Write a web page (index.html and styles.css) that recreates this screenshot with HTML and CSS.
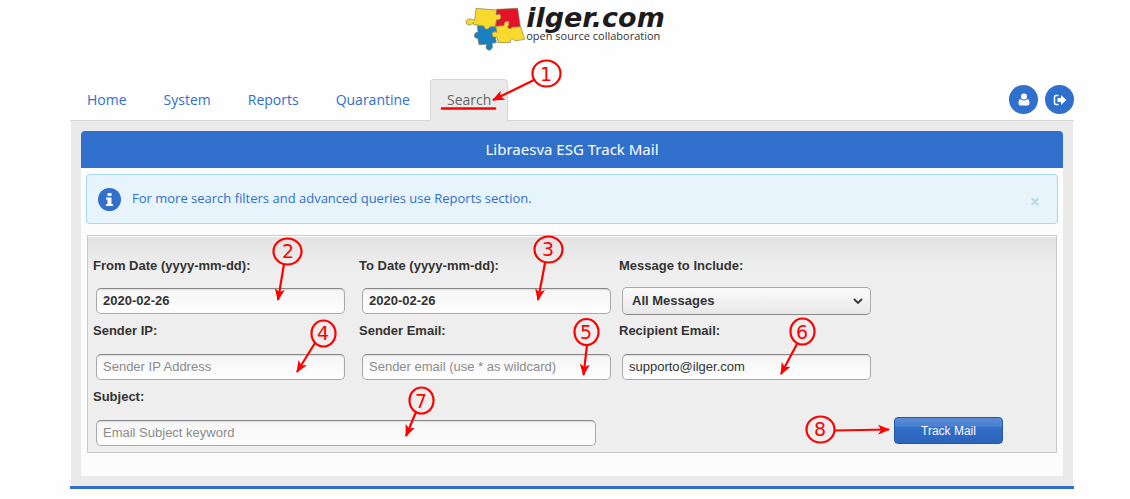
FILE: index.html
```html
<!DOCTYPE html>
<html lang="en">
<head>
<meta charset="utf-8">
<title>Libraesva ESG Track Mail</title>
<link rel="stylesheet" href="styles.css">
</head>
<body>
<div class="page">
  <header class="brand">
    <svg class="brand-mark" viewBox="24 18 183 138" aria-hidden="true">
      <g stroke="#8a7a50" stroke-width="2" stroke-linejoin="round">
        <path fill="#1a80c4" d="M61 77 L82 79 Q88 91 97 82 L116 80 L119 97 Q111 91 106 99 Q106 109 115 109 L118 128 L105 130 Q110 147 97 151 Q83 149 89 133 L66 134 L62 114 Q52 117 52 104 Q56 95 63 97 Z"/>
        <path fill="#f8da2c" d="M57 25 L119 30 L118 44 Q129 39 132 48 Q133 61 119 59 L116 79 L100 79 Q94 93 83 85 L80 77 L49 74 L49 68 Q39 80 29 72 Q24 61 35 57 Q44 55 53 61 Z"/>
        <path fill="#e5122b" d="M119 28 L182 25 L190 80 L166 82 Q160 92 151 85 Q148 73 157 68 Q152 60 143 67 L141 77 L116 78 L119 60 Q133 62 132 48 Q129 39 118 44 Z"/>
        <path fill="#f8da2c" d="M116 80 L141 77 Q140 65 150 65 Q161 71 152 80 Q156 91 166 82 L191 80 L203 118 L174 123 Q166 112 160 120 Q163 130 154 128 L124 128 L120 111 Q105 115 105 102 Q108 92 120 97 Z"/>
      </g>
    </svg>
    <div class="brand-text">
      <span class="brand-name">ilger.com</span>
      <span class="brand-tag">open source collaboration</span>
    </div>
  </header>

  <nav class="nav">
    <a class="tab" href="#home">Home</a>
    <a class="tab" href="#system">System</a>
    <a class="tab" href="#reports">Reports</a>
    <a class="tab" href="#quarantine">Quarantine</a>
    <a class="tab tab-active" href="#search">Search</a>
    <div class="actions">
      <button class="round" type="button" aria-label="Account">
        <svg viewBox="0 0 12 13" width="12" height="13"><path fill="#fff" d="M2.500 6Q.5 6.600 .5 10Q.5 12.500 2.500 12.500H9.500Q11.500 12.500 11.500 10Q11.500 6.600 9.500 6Q6 9 2.500 6Z"/><circle cx="6" cy="3.500" r="3" fill="#fff"/></svg>
      </button>
      <button class="round" type="button" aria-label="Log out">
        <svg viewBox="0 0 14 12" width="14" height="12"><path fill="none" stroke="#fff" stroke-width="1.500" d="M5.500 1.500H3Q1.500 1.500 1.500 3V9Q1.500 10.500 3 10.500H5.500"/><path fill="#fff" d="M4.500 4H8V1L13.300 6L8 11V8H4.500Z"/></svg>
      </button>
    </div>
  </nav>

  <main class="content">
    <section class="panel">
      <h1 class="panel-title">Libraesva ESG Track Mail</h1>
      <div class="alert">
        <svg class="alert-icon" viewBox="0 0 23 23" width="23" height="23" aria-hidden="true"><circle cx="11.500" cy="11.500" r="11.500" fill="#316fcc"/><path fill="#fff" d="M9.500 5H13.500V8H9.500ZM8 9.500H13.500V16H15V18H8V16H9.500V11.500H8Z"/></svg>
        <span class="alert-text">For more search filters and advanced queries use Reports section.</span>
        <button class="close" type="button" aria-label="Close">×</button>
      </div>
      <form class="form">
        <div class="field">
          <label for="from">From Date (yyyy-mm-dd):</label>
          <input class="box strong" id="from" type="text" value="2020-02-26">
        </div>
        <div class="field">
          <label for="to">To Date (yyyy-mm-dd):</label>
          <input class="box strong" id="to" type="text" value="2020-02-26">
        </div>
        <div class="field">
          <label for="include">Message to Include:</label>
          <div class="select-wrap">
            <select class="box select" id="include"><option>All Messages</option></select>
            <svg class="chevron" viewBox="0 0 10 7" width="10" height="7" aria-hidden="true"><path fill="none" stroke="#333" stroke-width="1.800" d="M1 1L5 5L9 1"/></svg>
          </div>
        </div>
        <div class="field">
          <label for="ip">Sender IP:</label>
          <input class="box" id="ip" type="text" placeholder="Sender IP Address">
        </div>
        <div class="field">
          <label for="sender">Sender Email:</label>
          <input class="box" id="sender" type="text" placeholder="Sender email (use * as wildcard)">
        </div>
        <div class="field">
          <label for="recipient">Recipient Email:</label>
          <input class="box" id="recipient" type="text" value="supporto@ilger.com">
        </div>
        <div class="field field-wide">
          <label for="subject">Subject:</label>
          <input class="box box-wide" id="subject" type="text" placeholder="Email Subject keyword">
        </div>
        <button class="submit" type="button">Track Mail</button>
      </form>
    </section>
  </main>

  <svg class="notes" viewBox="0 0 1130 499" width="1130" height="499" aria-hidden="true">
    <defs>
      <marker id="tip" viewBox="0 0 12 10" markerWidth="12" markerHeight="10" refX="11" refY="5" orient="auto" markerUnits="userSpaceOnUse"><path fill="#f00" d="M0 0L12 5L0 10L3 5Z"/></marker>
    </defs>
    <g fill="none" stroke="#f00" stroke-width="2.200">
      <ellipse cx="546.500" cy="73.500" rx="14" ry="13"/>
      <ellipse cx="287.500" cy="251.500" rx="14" ry="13"/>
      <ellipse cx="548.500" cy="249.500" rx="14" ry="13"/>
      <ellipse cx="323.500" cy="333.500" rx="12" ry="13"/>
      <ellipse cx="586.500" cy="332" rx="12" ry="13"/>
      <ellipse cx="802.500" cy="331.500" rx="12" ry="13"/>
      <ellipse cx="421.500" cy="400.500" rx="12" ry="13"/>
      <ellipse cx="820.500" cy="429.500" rx="14" ry="13"/>
      <path stroke-width="2.500" stroke-linecap="round" d="M442 108.500H495"/>
      <g marker-end="url(#tip)">
        <path d="M534 80L493 100"/>
        <path d="M284 264L278 300"/>
        <path d="M545 263L538 300"/>
        <path d="M315 343L297 372"/>
        <path d="M587 345L583.500 375"/>
        <path d="M797 344L781 374"/>
        <path d="M416 412L406 436"/>
        <path d="M835 430.500L889 429.500"/>
      </g>
    </g>
    <g class="note-num">
      <text x="546" y="81">1</text>
      <text x="288" y="258">2</text>
      <text x="548" y="256">3</text>
      <text x="323" y="340">4</text>
      <text x="586" y="339">5</text>
      <text x="802" y="339">6</text>
      <text x="421" y="408">7</text>
      <text x="820" y="436">8</text>
    </g>
  </svg>
</div>
</body>
</html>
```

FILE: styles.css
```css
* { box-sizing: border-box; }
body {
  margin: 0;
  background: #fefefe;
  color: #333;
  font-family: "Liberation Sans", Arial, sans-serif;
  font-size: 13px;
}
.page {
  position: relative;
  padding: 0 56px 10px 70px;
}
.brand {
  display: flex;
  justify-content: center;
  padding: 6px 14px 0 0;
  height: 79px;
}
.brand-mark { width: 61px; height: 46px; }
.brand-text { display: flex; flex-direction: column; }
.brand-name {
  font: italic bold 27px/24px "DejaVu Sans", sans-serif;
  color: #1c1b1e;
}
.brand-tag {
  font: 11px/12px "Open Sans", sans-serif;
  color: #333;
}
.nav {
  display: flex;
  height: 42px;
  border-bottom: 1px solid #d6d6d6;
}
.tab {
  padding: 0 17px;
  margin-right: 3px;
  font: 14px/42px "Open Sans", sans-serif;
  color: #316fcc;
  text-decoration: none;
}
.tab-active {
  height: 42px;
  padding: 0 16px;
  border: 1px solid #d6d6d6;
  border-bottom: 0;
  border-radius: 4px 4px 0 0;
  background: #eaeaea;
  color: #666;
  line-height: 40px;
}
.actions {
  display: flex;
  gap: 7px;
  margin-left: auto;
  padding-top: 6px;
}
.round {
  display: flex;
  align-items: center;
  justify-content: center;
  width: 29px;
  height: 29px;
  padding: 0;
  border: 0;
  border-radius: 50%;
  background: #316fcc;
}
.content {
  padding: 10px;
  border: solid #fefefe;
  border-width: 0 1px;
  background: #eaeaea;
  position: relative;
}
.content::after {
  content: "";
  position: absolute;
  left: -1px;
  right: -1px;
  top: 100%;
  height: 3px;
  background: #316fcc;
}
.panel {
  padding-bottom: 23px;
  border-radius: 4px 4px 0 0;
  background: #fcfcfc;
}
.panel-title {
  margin: 0;
  padding-bottom: 1px;
  border-radius: 4px 4px 0 0;
  background: #316fcc;
  color: #fff;
  text-align: center;
  font: 15px/36px "Noto Sans", sans-serif;
}
.alert {
  display: flex;
  align-items: center;
  height: 50px;
  margin: 6px 5px 11px;
  padding: 0 17px 0 11px;
  border: 1px solid #a5d8ea;
  border-radius: 4px;
  background: #e7f4fb;
}
.alert-text {
  margin-left: 11px;
  padding-bottom: 2px;
  font: 13px/20px "Open Sans", sans-serif;
  color: #316fcc;
}
.close {
  margin: 4px 0 0 auto;
  padding: 0;
  border: 0;
  background: none;
  font: bold 18px/18px "Open Sans", sans-serif;
  color: #b5dcea;
}
.form {
  display: grid;
  grid-template-columns: 266fr 260fr 432fr;
  row-gap: 7px;
  margin: 0 6px;
  padding: 20px 5px 6px;
  border: 1px solid #c8c8c8;
  background: linear-gradient(#e2e2e2, #eee 32px);
  box-shadow: inset 0 1px #fff;
}
.field {
  display: flex;
  flex-direction: column;
  gap: 12px;
}
.field:nth-child(n+4) { gap: 13px; }
.field-wide { grid-column: span 2; }
.field label {
  font-weight: bold;
  line-height: 20px;
}
.box {
  width: 249px;
  height: 26px;
  margin: 0 0 0 3px;
  padding: 0 6px 1px;
  border: 1px solid #aaa;
  border-top-color: #888;
  border-radius: 5px;
  background: linear-gradient(#f5f5f5, #fefefe);
  box-shadow: inset 0 1px 1px #ddd;
  color: #333;
  font: 13px "Liberation Sans", Arial, sans-serif;
}
.box::placeholder { color: #8c8c8c; opacity: 1; }
.box-wide { width: 500px; }
.strong { font-weight: bold; }
.select-wrap {
  position: relative;
  display: flex;
  align-items: center;
  width: 252px;
  height: 26px;
}
.select {
  appearance: none;
  flex: none;
  height: 28px;
  padding: 0 9px 1px;
  border-color: #aaa;
  border-bottom-color: #888;
  background: linear-gradient(#fbfbfb, #e8e8e8);
  box-shadow: none;
  font-weight: bold;
}
.chevron {
  position: absolute;
  right: 8px;
}
.submit {
  justify-self: end;
  align-self: end;
  width: 109px;
  height: 27px;
  margin: 0 48px 2px 0;
  padding: 0;
  border: 1px solid #2458a8;
  border-radius: 4px;
  background: linear-gradient(#5b8dd7, #477fd0 35%, #316fcc 36%, #2c64ba);
  color: #fff;
  font: 12px "Liberation Sans", Arial, sans-serif;
}
.notes {
  position: absolute;
  top: 0;
  left: 0;
  pointer-events: none;
}
.note-num {
  fill: #f00;
  font: 19px "DejaVu Sans", sans-serif;
  text-anchor: middle;
}
```
